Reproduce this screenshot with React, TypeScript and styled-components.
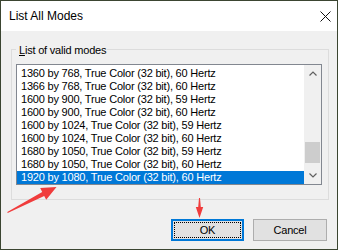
import React from "react";
import styled, { createGlobalStyle } from "styled-components";

const Global = createGlobalStyle`
  html, body { margin: 0; padding: 0; background: #ffffff; }
  body { font-family: "Liberation Sans", Arial, sans-serif; color: #000; }
  * { box-sizing: border-box; }
`;

const Window = styled.div`
  position: relative;
  width: 338px;
  height: 250px;
  border: 1px solid #3b4531;
  background: #f0f0f0;
  display: flex;
  flex-direction: column;
`;

const TitleBar = styled.div`
  height: 30px;
  background: #ffffff;
  display: flex;
  align-items: center;
  justify-content: space-between;
  padding-left: 8px;
  font-size: 12px;
  line-height: 14px;
`;

const Close = styled.div`
  width: 24px;
  height: 30px;
  display: flex;
  align-items: center;
  justify-content: center;
`;

const Body = styled.div`
  flex: 1;
  display: flex;
  flex-direction: column;
  padding: 0 8px 8px 10px;
`;

const Group = styled.fieldset`
  margin: 10px 0 0 0;
  border: 1px solid #dcdcdc;
  padding: 7px 5px 14px 4px;
  min-width: 0;
`;

const Legend = styled.legend`
  font-size: 11px;
  line-height: 14px;
  height: 16px;
  padding: 2px 1px 0 3px;
  margin-left: 0;
  letter-spacing: -0.2px;
  u { text-decoration: underline; text-underline-offset: 1px; }
`;

const ListBox = styled.div`
  width: 306px;
  height: 121px;
  border: 1px solid #828790;
  background: #ffffff;
  display: flex;
`;

const Rows = styled.div`
  flex: 1;
  padding-top: 2px;
  overflow: hidden;
`;

const Row = styled.div<{ $selected?: boolean }>`
  height: 13px;
  line-height: 13px;
  font-size: 11px;
  letter-spacing: -0.2px;
  padding-left: 4px;
  white-space: nowrap;
  background: ${(p) => (p.$selected ? "#0078d7" : "transparent")};
  color: ${(p) => (p.$selected ? "#ffffff" : "#000000")};
`;

const ScrollBar = styled.div`
  width: 17px;
  background: #f0f0f0;
  display: flex;
  flex-direction: column;
`;

const ArrowBox = styled.div`
  height: 17px;
  display: flex;
  align-items: center;
  justify-content: center;
`;

const Track = styled.div`
  flex: 1;
  display: flex;
  flex-direction: column;
`;

const Thumb = styled.div<{ $top: number; $size: number }>`
  margin: ${(p) => p.$top}px 1px 0 1px;
  height: ${(p) => p.$size}px;
  background: #cdcdcd;
`;

const ButtonRow = styled.div`
  display: flex;
  justify-content: flex-end;
  gap: 9px;
  margin-top: 19px;
  padding-right: 2px;
`;

const Button = styled.div<{ $default?: boolean; $w: number }>`
  position: relative;
  width: ${(p) => p.$w}px;
  height: 22px;
  background: #e1e1e1;
  border: 1px solid ${(p) => (p.$default ? "#0078d7" : "#adadad")};
  box-shadow: ${(p) => (p.$default ? "inset 0 0 0 1px #0078d7" : "none")};
  display: flex;
  align-items: center;
  justify-content: center;
  font-size: 11px;
  line-height: 13px;
  letter-spacing: -0.2px;
  ${(p) =>
    p.$default
      ? `&::after { content: ""; position: absolute; inset: 2px; border: 1px dotted #000; }`
      : ""}
`;

const Overlay = styled.svg`
  position: absolute;
  left: -1px;
  top: -1px;
  pointer-events: none;
`;

const modes = [
  "1360 by 768, True Color (32 bit), 60 Hertz",
  "1366 by 768, True Color (32 bit), 60 Hertz",
  "1600 by 900, True Color (32 bit), 59 Hertz",
  "1600 by 900, True Color (32 bit), 60 Hertz",
  "1600 by 1024, True Color (32 bit), 59 Hertz",
  "1600 by 1024, True Color (32 bit), 60 Hertz",
  "1680 by 1050, True Color (32 bit), 59 Hertz",
  "1680 by 1050, True Color (32 bit), 60 Hertz",
  "1920 by 1080, True Color (32 bit), 60 Hertz",
];

const Chevron = ({ up }: { up?: boolean }) => (
  <svg width="8" height="5" viewBox="0 0 8 5">
    <polyline
      points={up ? "0.5,4.5 4,1 7.5,4.5" : "0.5,0.5 4,4 7.5,0.5"}
      fill="none"
      stroke="#606060"
      strokeWidth="1.2"
    />
  </svg>
);

export default function App() {
  return (
    <>
      <Global />
      <Window>
        <TitleBar>
          <span>List All Modes</span>
          <Close>
            <svg width="11" height="11" viewBox="0 0 11 11">
              <path d="M0.5 0.5 L10.5 10.5 M10.5 0.5 L0.5 10.5" stroke="#111" strokeWidth="1" />
            </svg>
          </Close>
        </TitleBar>
        <Body>
          <Group>
            <Legend>
              <u>L</u>ist of valid modes
            </Legend>
            <ListBox>
              <Rows>
                {modes.map((m, i) => (
                  <Row key={i} $selected={i === modes.length - 1}>
                    {m}
                  </Row>
                ))}
              </Rows>
              <ScrollBar>
                <ArrowBox>
                  <Chevron up />
                </ArrowBox>
                <Track>
                  <Thumb $top={60} $size={21} />
                </Track>
                <ArrowBox>
                  <Chevron />
                </ArrowBox>
              </ScrollBar>
            </ListBox>
          </Group>
          <ButtonRow>
            <Button $default $w={73}>OK</Button>
            <Button $w={74}>Cancel</Button>
          </ButtonRow>
        </Body>
        <Overlay width="338" height="250" viewBox="0 0 338 250">
          <polygon
            points="7.7,212.9 44.2,195.9 46.2,199.7 56.5,187 40.2,188.1 42.2,191.9 7.3,212.1"
            fill="#f03c3c"
          />
          <polygon
            points="199,198 200,198 200.8,207 203.2,207 199.5,218 195.8,207 198.2,207"
            fill="#f03c3c"
          />
        </Overlay>
      </Window>
    </>
  );
}
